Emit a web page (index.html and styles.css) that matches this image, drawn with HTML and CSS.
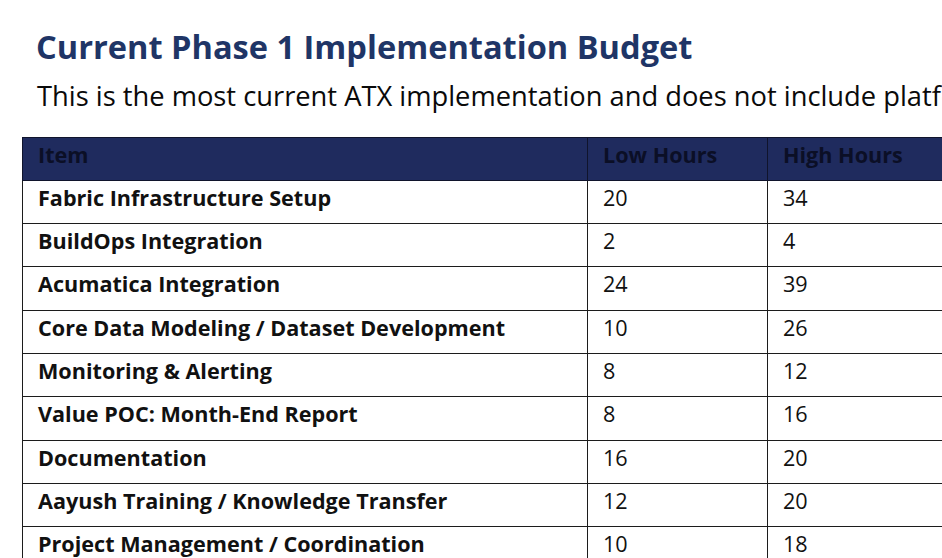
FILE: index.html
```html
<!DOCTYPE html>
<html lang="en">
<head>
<meta charset="utf-8">
<title>Current Phase 1 Implementation Budget</title>
<link rel="stylesheet" href="styles.css">
</head>
<body>
<main class="page">
  <h1 class="title">Current Phase 1 Implementation Budget</h1>
  <p class="subtitle">This is the most current ATX implementation and does not include platform</p>
  <table class="budget">
    <colgroup>
      <col class="col-item">
      <col class="col-low">
      <col class="col-high">
    </colgroup>
    <thead>
      <tr><th>Item</th><th>Low Hours</th><th>High Hours</th></tr>
    </thead>
    <tbody>
      <tr><td class="item">Fabric Infrastructure Setup</td><td>20</td><td>34</td></tr>
      <tr><td class="item">BuildOps Integration</td><td>2</td><td>4</td></tr>
      <tr><td class="item">Acumatica Integration</td><td>24</td><td>39</td></tr>
      <tr><td class="item">Core Data Modeling / Dataset Development</td><td>10</td><td>26</td></tr>
      <tr><td class="item">Monitoring &amp; Alerting</td><td>8</td><td>12</td></tr>
      <tr><td class="item">Value POC: Month-End Report</td><td>8</td><td>16</td></tr>
      <tr><td class="item">Documentation</td><td>16</td><td>20</td></tr>
      <tr><td class="item">Aayush Training / Knowledge Transfer</td><td>12</td><td>20</td></tr>
      <tr><td class="item">Project Management / Coordination</td><td>10</td><td>18</td></tr>
    </tbody>
  </table>
</main>
</body>
</html>
```

FILE: styles.css
```css
html, body {
  margin: 0;
  padding: 0;
  background: #ffffff;
  overflow: hidden;
}

body {
  width: 942px;
  height: 558px;
  font-family: "Open Sans", "Noto Sans", sans-serif;
  color: #000000;
}

.page {
  padding-top: 28px;
}

.title {
  margin: 0;
  padding-left: 36px;
  font-size: 32.6px;
  line-height: 38px;
  font-weight: 700;
  color: #1f3566;
  white-space: nowrap;
}

.subtitle {
  margin: 14px 0 0;
  padding-left: 37px;
  font-size: 27.3px;
  line-height: 32px;
  font-weight: 400;
  color: #0a0a0a;
  white-space: nowrap;
}

.budget {
  margin: 24.5px 0 0 22px;
  border-collapse: collapse;
  table-layout: fixed;
  width: 960px;
}

.col-item { width: 565px; }
.col-low { width: 180px; }
.col-high { width: 215px; }

.budget th,
.budget td {
  height: 43.33px;
  box-sizing: border-box;
  padding: 4px 15px 0;
  vertical-align: top;
  text-align: left;
  font-size: 21.6px;
  line-height: 26px;
  border: 1px solid #1c1c1c;
  white-space: nowrap;
}

.budget th {
  background: #1f2b5e;
  color: #0b0f26;
  font-weight: 700;
  border-color: #10142c;
}

.budget td {
  font-weight: 400;
  color: #111111;
}

.budget td.item {
  font-weight: 700;
}
```
